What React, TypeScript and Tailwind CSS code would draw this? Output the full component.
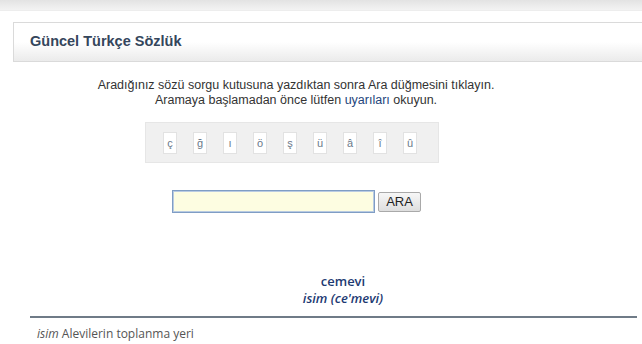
import React, { useState } from "react";

const LETTERS = ["ç", "ğ", "ı", "ö", "ş", "ü", "â", "î", "û"];

const App = () => {
  const [query, setQuery] = useState("");

  return (
    <div className="w-[642px] h-[344px] overflow-hidden bg-white [font-family:'Liberation_Sans',Arial,sans-serif]">
      {/* top strip */}
      <div className="h-[11px] bg-gradient-to-b from-[#e3e3e3] to-[#f3f3f3] border-b border-[#ededed]" />

      {/* title bar */}
      <div className="mt-[11px] ml-[13px] h-[40px] flex items-center pl-[16px] border border-r-0 border-[#dadada] bg-gradient-to-b from-white via-white to-[#ebebeb]">
        <h1 className="text-[14.5px] font-bold text-[#34465c] [font-family:'Liberation_Sans',Arial,sans-serif]">
          Güncel Türkçe Sözlük
        </h1>
      </div>

      {/* instructions */}
      <div className="w-[592px] mt-[16px] text-center text-[12.5px] leading-[15px] text-[#333] [font-family:'Liberation_Sans',Arial,sans-serif]">
        <p>Aradığınız sözü sorgu kutusuna yazdıktan sonra Ara düğmesini tıklayın.</p>
        <p>
          Aramaya başlamadan önce lütfen <span className="text-[#24457c]">uyarıları</span> okuyun.
        </p>
      </div>

      {/* special characters */}
      <div className="ml-[145px] mt-[14px] w-[294px] h-[41px] flex items-start gap-[16px] pl-[17px] pt-[9px] bg-[#f0f0f0] border border-[#e6e6e6]">
        {LETTERS.map((ch) => (
          <button
            key={ch}
            type="button"
            onClick={() => setQuery(query + ch)}
            className="w-[14px] h-[22px] flex items-center justify-center bg-white border border-[#e2e2e2] text-[11px] text-[#6a7989] [font-family:'Liberation_Sans',Arial,sans-serif]"
          >
            {ch}
          </button>
        ))}
      </div>

      {/* search */}
      <div className="ml-[172px] mt-[27px] flex items-center gap-[3px]">
        <input
          type="text"
          value={query}
          onChange={(e) => setQuery(e.target.value)}
          className="w-[203px] h-[23px] bg-[#fdfde1] border border-[#7f9dc4] shadow-[inset_0_0_0_1px_#b9cbe2] outline-none px-1 text-[13px]"
        />
        <button
          type="button"
          className="w-[43px] h-[20px] bg-gradient-to-b from-[#f7f7f7] to-[#dedede] border border-[#a9a9a9] rounded-[2px] text-[13px] text-[#222] leading-none [font-family:'Liberation_Sans',Arial,sans-serif]"
        >
          ARA
        </button>
      </div>

      {/* result */}
      <div className="w-[686px] mt-[60px] flex flex-col items-center [font-family:'Open_Sans',sans-serif] text-[13px] leading-[17px] text-[#1d3a72]">
        <p className="font-semibold">cemevi</p>
        <p className="font-semibold italic">isim (ce'mevi)</p>
      </div>

      <div className="ml-[30px] mr-[5px] mt-[9px] h-[2px] bg-[#6f7b87]" />

      <p className="ml-[37px] mt-[8px] [font-family:'Open_Sans',sans-serif] text-[12px] leading-[16px] text-[#555]">
        <i>isim</i> Alevilerin toplanma yeri
      </p>
    </div>
  );
};

export default App;
